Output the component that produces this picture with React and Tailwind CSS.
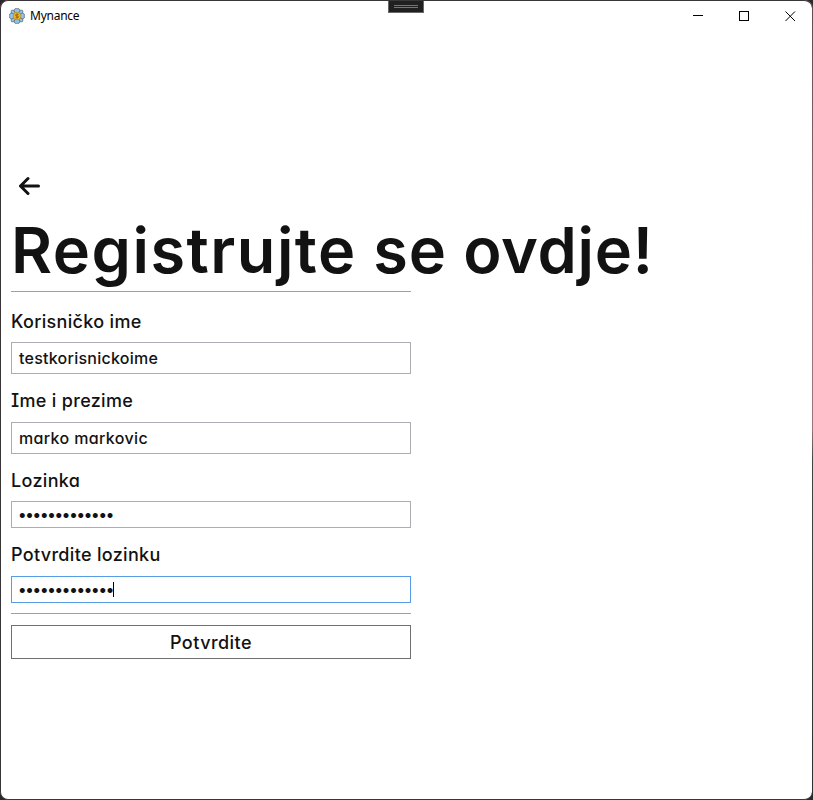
import React from "react";

const font = "font-['Inter','Noto_Sans',sans-serif] [font-feature-settings:'cv11','cv08','ss03'] text-[#121212] whitespace-nowrap";

function Logo() {
  return (
    <svg width="16" height="16" viewBox="0 0 16 16">
      <g fill="#8fc8f0" stroke="#55606b" strokeWidth=".7">
        <path d="M4.5 3.5 6 .7h4l1.5 2.8L8 5z" />
        <path d="M4.5 12.5 6 15.3h4l1.5-2.8L8 11z" />
        <path d="M3.5 4.5.7 6v4l2.8 1.5L5 8z" />
        <path d="M12.5 4.5 15.3 6v4l-2.8 1.5L11 8z" />
        <path d="M2 4.5 2.4 2.4 4.5 2l1.3 2.3L4.3 5.8zM14 4.5l-.4-2.1-2.1-.4-1.3 2.3 1.5 1.5zM2 11.5l.4 2.1 2.1.4 1.3-2.3-1.5-1.5zM14 11.5l-.4 2.1-2.1.4-1.3-2.3 1.5-1.5z" />
      </g>
      <circle cx="8" cy="8" r="4" fill="#e9b52b" stroke="#a98a45" strokeWidth=".7" />
      <path d="M9.4 6.3H7.4a.8.8 0 0 0 0 1.7h1.2a.8.8 0 0 1 0 1.700H6.6M8 5.500v5" fill="none" stroke="#8a5a12" strokeWidth=".8" />
    </svg>
  );
}

function TitleBar() {
  return (
    <header className="relative flex h-[30px] shrink-0 items-center pl-2">
      <Logo />
      <span className="ml-[5px] font-['Noto_Sans',sans-serif] text-[12px] leading-[16px] tracking-[-0.25px] text-black">Mynance</span>
      <svg className="-mr-px ml-auto" width="138" height="30" viewBox="0 0 138 30" fill="none" stroke="#000" shapeRendering="crispEdges">
        <path d="M18 14.5h10" />
        <rect x="64.5" y="10.5" width="9" height="9" />
        <path d="m110.500 10.500 9.500 9.500m0-9.500-9.500 9.500" shapeRendering="auto" />
      </svg>
      <div className="absolute left-[387px] top-[-1px] flex h-[13px] w-9 flex-col items-center gap-px border border-[#686868] bg-[#202020] pt-1">
        <div className="h-px w-6 bg-[#757575]" />
        <div className="h-px w-6 bg-[#757575]" />
      </div>
    </header>
  );
}

function Label({ children, className }) {
  return <div className={`${font} h-6 text-[18px] leading-6 font-medium tracking-[0.32px] ${className}`}>{children}</div>;
}

function Field({ children, className }) {
  return <div className={`${font} flex items-center border pl-[7px] text-[16px] font-medium ${className}`}>{children}</div>;
}

function Dots() {
  return <span className="-ml-px -mt-0.5 tracking-[-1.22px]">•••••••••••••</span>;
}

export default function App() {
  return (
    <div className="h-[800px] w-[813px] overflow-hidden bg-[#2a282b]">
      <div className="h-full w-full overflow-hidden rounded-[8px] bg-[linear-gradient(to_bottom,#684850_0,#a07078_300px,#a07078_430px,#444_460px,#302d32_800px)] pr-px">
        <div className="h-full w-full overflow-hidden rounded-[8px] border border-r-0 border-[#39363a] bg-white">
          <div className="flex h-full flex-col">
            <TitleBar />
            <main className="flex flex-col items-start pl-[10px] pt-[144px]">
              <svg className="ml-2" width="22" height="22" viewBox="0 0 22 22" fill="none" stroke="#121212" strokeWidth="3" strokeLinecap="round" strokeLinejoin="round">
                <path d="M19.500 11H2M9 3.500 1.500 11l7.500 7.500" />
              </svg>
              <h1 className={`${font} mt-[13px] h-[80px] text-[63px] leading-[80px] font-[590] tracking-[0.7px]`}>
                <span className="tracking-[1.5px]">Registrujte</span> se ovdje!
              </h1>
              <div className="mt-px h-px w-[400px] bg-[#a0a0a0]" />
              <Label className="mt-[18px]">Korisničko ime</Label>
              <Field className="mt-2 h-8 w-[400px] border-[#abadb3] tracking-[0.25px]">testkorisnickoime</Field>
              <Label className="mt-[15px]">Ime i prezime</Label>
              <Field className="mt-[9px] h-8 w-[400px] border-[#abadb3] tracking-[0.36px]">marko markovic</Field>
              <Label className="mt-[15px]">Lozinka</Label>
              <Field className="mt-2 h-[27px] w-[400px] border-[#abadb3]"><Dots /></Field>
              <Label className="mt-[15px]">Potvrdite lozinku</Label>
              <Field className="mt-[9px] h-[27px] w-[400px] border-[#569de5]">
                <Dots />
                <span className="h-[15px] w-px bg-black" />
              </Field>
              <div className="mt-[10px] h-px w-[400px] bg-[#a0a0a0]" />
              <button className={`${font} mt-[11px] h-[34px] w-[400px] border border-[#707070] text-[18px] font-medium tracking-[0.45px]`}>Potvrdite</button>
            </main>
          </div>
        </div>
      </div>
    </div>
  );
}
